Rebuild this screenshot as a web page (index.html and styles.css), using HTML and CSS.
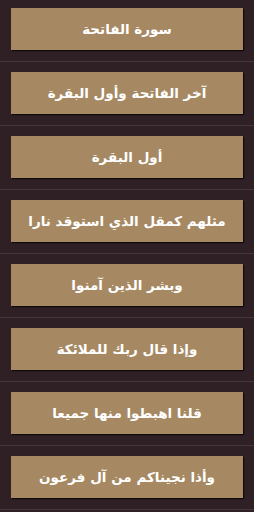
FILE: index.html
```html
<!DOCTYPE html>
<html lang="ar" dir="rtl">
  <head>
    <meta charset="UTF-8" />
    <meta name="viewport" content="width=device-width, initial-scale=1.0" />
    <title>Document</title>
    <link rel="stylesheet" href="styles.css">
  </head>

  <body>
    <div class="list">
      <div class="item"><div class="card">سورة الفاتحة</div></div>
      <div class="item"><div class="card">آخر الفاتحة وأول البقرة</div></div>
      <div class="item"><div class="card">أول البقرة</div></div>
      <div class="item"><div class="card">مثلهم كمقل الذي استوقد نارا</div></div>
      <div class="item"><div class="card">وبشر الذين آمنوا</div></div>
      <div class="item"><div class="card">وإذا قال ربك للملائكة</div></div>
      <div class="item"><div class="card">قلنا اهبطوا منها جميعا</div></div>
      <div class="item"><div class="card">وأذا نجيناكم من آل فرعون</div></div>
    </div>
  </body>
</html>
```

FILE: styles.css
```css
body {
  margin: 0;
  background-color: #2e2024;
  font-family: "DejaVu Sans", sans-serif;
}

.list {
  width: 254px;
}

.item {
  padding: 10.5px 11px;
  border-bottom: 1.43px solid #45363a;
}

.item:first-child {
  padding-top: 8px;
}

.card {
  height: 42px;
  display: flex;
  justify-content: center;
  align-items: center;
  background-color: #a68962;
  box-shadow: 1px 1px 1px rgba(10, 4, 6, 0.8);
  color: #fff;
  font-size: 13.5px;
  font-weight: bold;
}
```
